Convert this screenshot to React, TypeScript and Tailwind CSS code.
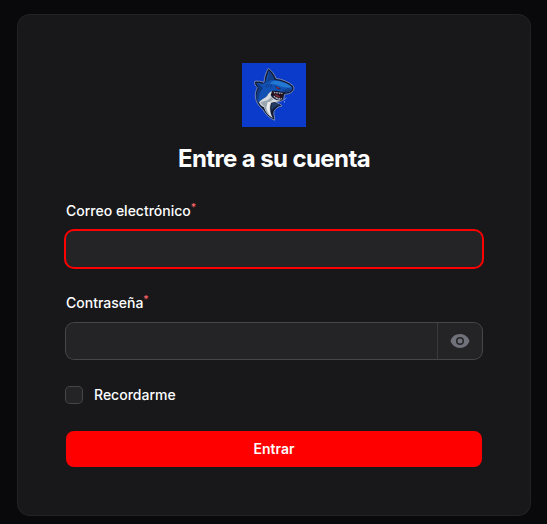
import React from "react";

function SharkLogo() {
  return (
    <svg viewBox="0 0 192 192" className="h-16 w-16" role="img" aria-label="Logo">
      <rect width="192" height="192" fill="#0b3bcb" />
      <path
        d="M79 16 C89 23 98 34 102 46 C122 49 139 56 152 67 C158 74 156 81 151 86 C144 92 135 94 128 94 L125 109 C119 116 109 117 101 119 C110 121 118 124 120 129 C108 130 100 137 96 146 C94 155 99 163 98 172 C83 166 70 154 62 139 C50 130 42 117 40 102 C39 91 42 81 46 74 C39 68 36 60 38 55 C47 53 58 55 66 58 C67 44 71 29 79 16 Z"
        fill="#111a35"
        stroke="#7185b5"
        strokeWidth="3"
        strokeLinejoin="round"
      />
      <path
        d="M80 23 C89 31 94 40 97 50 C119 53 137 60 149 71 C154 79 147 86 135 88 C119 87 103 81 91 84 C81 88 76 97 70 105 C63 111 54 113 49 119 C41 107 43 89 51 76 L43 60 C54 59 64 66 70 58 Z"
        fill="#1251b4"
      />
      <path d="M98 53 C117 54 137 61 149 72 C140 76 126 73 113 69 C103 65 93 62 84 63 C87 57 92 54 98 53 Z" fill="#2379d2" />
      <path d="M80 23 C82 35 80 46 72 60 L84 52 L97 50 C94 40 88 31 80 23 Z" fill="#123e86" />
      <path d="M43 60 L55 67 L63 76 C53 86 49 101 49 117 C41 103 43 88 51 76 Z" fill="#103986" />
      <path d="M120 81 C130 80 141 81 148 78 C146 86 138 88 130 88 Z" fill="#143c80" />
      <path
        d="M51 117 C59 109 69 106 75 99 C80 91 84 86 90 85 L86 96 C91 106 101 113 116 112 C107 118 96 118 88 119 C82 132 84 151 93 166 C79 158 69 147 66 133 C58 129 52 123 51 117 Z"
        fill="#d4dadd"
      />
      <path d="M68 114 C76 112 84 107 87 101 L94 110 C84 114 76 121 72 134 C75 146 82 157 90 163 C75 153 68 142 67 130 C61 127 57 122 55 118 Z" fill="#9ba7ae" />
      <path d="M77 117 C73 130 76 145 85 155 C79 138 80 127 85 118 Z" fill="#edf0ef" />
      <path d="M90 120 C99 120 108 122 114 126 C102 127 94 135 89 143 C87 134 88 126 90 120 Z" fill="#233c62" />
      <path d="M90 85 C104 86 118 91 129 90 L123 97 L120 108 C107 109 95 103 90 94 Z" fill="#24101d" />
      <path d="M97 94 C105 93 112 98 116 103 C108 105 101 101 97 94 Z" fill="#75263d" />
      <path d="M94 86 L98 92 L101 87 L105 93 L109 88 L112 94 L116 90 L119 94 L123 90 Z" fill="#a9b0bf" />
      <path d="M94 99 L98 98 L101 104 L105 102 L108 107 L112 104 L115 108 L119 104 L120 109 C110 112 101 109 94 99 Z" fill="#b1b8c5" />
      <path d="M99 68 L117 78 L107 79 Z" fill="#141a30" />
      <path d="M103 71 L113 76 L107 77 Z" fill="#dd3038" />
      <path d="M134 78 L142 76 M75 64 L72 69 L74 73 M82 64 L79 69 L81 73 M89 64 L86 69 L89 73" fill="none" stroke="#12346f" strokeWidth="2" />
      <path d="M125 111 L128 109 M130 107 L133 105 M126 116 L129 117" stroke="#a2baf2" strokeWidth="3" />
    </svg>
  );
}

function EyeIcon() {
  return (
    <svg viewBox="0 0 20 20" fill="currentColor" className="h-5 w-5" aria-hidden="true">
      <path d="M10 12.5a2.5 2.5 0 1 0 0-5 2.5 2.5 0 0 0 0 5Z" />
      <path
        fillRule="evenodd"
        clipRule="evenodd"
        d="M.664 10.59a1.651 1.651 0 0 1 0-1.186A10.004 10.004 0 0 1 10 3c4.257 0 7.893 2.66 9.336 6.41.147.381.146.804 0 1.186A10.004 10.004 0 0 1 10 17c-4.257 0-7.893-2.66-9.336-6.41ZM14 10a4 4 0 1 1-8 0 4 4 0 0 1 8 0Z"
      />
    </svg>
  );
}

function FieldLabel({ htmlFor, children }: { htmlFor: string; children: React.ReactNode }) {
  return (
    <label htmlFor={htmlFor} className="h-6 text-sm leading-6 font-medium text-white">
      {children}
      <sup className="font-medium text-red-400">*</sup>
    </label>
  );
}

export default function App() {
  return (
    <div className="flex h-[524px] justify-center bg-zinc-950 pt-[15px] pr-0 pl-px font-['Inter','Liberation_Sans',sans-serif]">
      <main className="h-[500px] w-[512px] rounded-xl bg-zinc-900 p-12 ring-1 ring-white/10">
        <header className="flex flex-col items-center">
          <SharkLogo />
          <h1 className="mt-4 text-2xl leading-8 font-bold tracking-tight text-white">Entre a su cuenta</h1>
        </header>
        <form className="mt-6 flex flex-col gap-6" onSubmit={(e) => e.preventDefault()}>
          <div className="flex flex-col gap-2">
            <FieldLabel htmlFor="email">Correo electrónico</FieldLabel>
            <div className="flex h-9 rounded-lg bg-white/5 ring-2 ring-[#ff0000]">
              <input id="email" type="email" className="w-full bg-transparent px-3 text-sm text-white outline-none" />
            </div>
          </div>
          <div className="flex flex-col gap-2">
            <FieldLabel htmlFor="password">Contraseña</FieldLabel>
            <div className="flex h-9 rounded-lg bg-white/5 ring-1 ring-white/20">
              <input id="password" type="password" className="min-w-0 flex-1 bg-transparent px-3 text-sm text-white outline-none" />
              <button type="button" aria-label="Mostrar contraseña" className="flex w-[45px] items-center justify-center border-l border-white/10 text-zinc-500">
                <EyeIcon />
              </button>
            </div>
          </div>
          <label className="flex h-6 items-center gap-3 text-sm leading-6 font-medium text-white">
            <input type="checkbox" className="h-4 w-4 appearance-none rounded bg-white/5 ring-1 ring-white/20" />
            Recordarme
          </label>
          <button type="submit" className="h-9 rounded-lg bg-[#ff0000] text-sm font-semibold text-white">
            Entrar
          </button>
        </form>
      </main>
    </div>
  );
}
